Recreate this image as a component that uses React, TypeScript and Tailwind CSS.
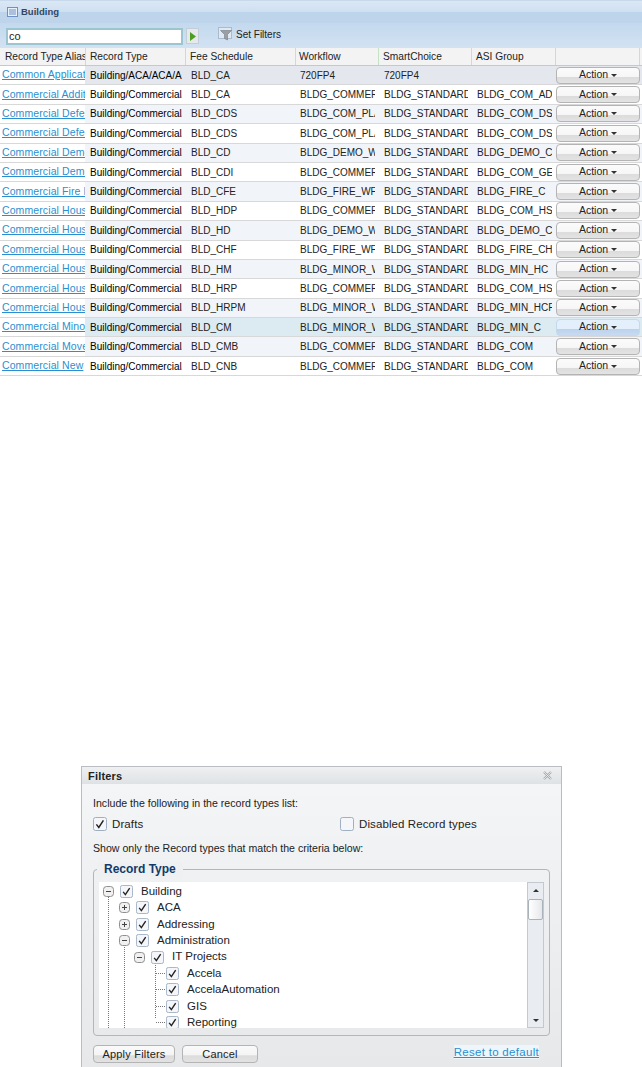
const rows = [
  ["Common Application", "Building/ACA/ACA/ACA", "BLD_CA", "720FP4", "720FP4", ""],
  ["Commercial Addition", "Building/Commercial/", "BLD_CA", "BLDG_COMMERCIAL", "BLDG_STANDARD", "BLDG_COM_AD"],
  ["Commercial Deferred", "Building/Commercial/", "BLD_CDS", "BLDG_COM_PLAN", "BLDG_STANDARD", "BLDG_COM_DS"],
  ["Commercial Deferred", "Building/Commercial/", "BLD_CDS", "BLDG_COM_PLAN", "BLDG_STANDARD", "BLDG_COM_DS"],
  ["Commercial Demolition", "Building/Commercial/", "BLD_CD", "BLDG_DEMO_WF", "BLDG_STANDARD", "BLDG_DEMO_C"],
  ["Commercial Demolition", "Building/Commercial/", "BLD_CDI", "BLDG_COMMERCIAL", "BLDG_STANDARD", "BLDG_COM_GE"],
  ["Commercial Fire Dam", "Building/Commercial/", "BLD_CFE", "BLDG_FIRE_WF", "BLDG_STANDARD", "BLDG_FIRE_C"],
  ["Commercial Housing", "Building/Commercial/", "BLD_HDP", "BLDG_COMMERCIAL", "BLDG_STANDARD", "BLDG_COM_HS"],
  ["Commercial Housing", "Building/Commercial/", "BLD_HD", "BLDG_DEMO_WF", "BLDG_STANDARD", "BLDG_DEMO_C"],
  ["Commercial Housing", "Building/Commercial/", "BLD_CHF", "BLDG_FIRE_WF", "BLDG_STANDARD", "BLDG_FIRE_CH"],
  ["Commercial Housing", "Building/Commercial/", "BLD_HM", "BLDG_MINOR_WF", "BLDG_STANDARD", "BLDG_MIN_HC"],
  ["Commercial Housing", "Building/Commercial/", "BLD_HRP", "BLDG_COMMERCIAL", "BLDG_STANDARD", "BLDG_COM_HS"],
  ["Commercial Housing", "Building/Commercial/", "BLD_HRPM", "BLDG_MINOR_WF", "BLDG_STANDARD", "BLDG_MIN_HCF"],
  ["Commercial Minor", "Building/Commercial/", "BLD_CM", "BLDG_MINOR_WF", "BLDG_STANDARD", "BLDG_MIN_C"],
  ["Commercial Move", "Building/Commercial/", "BLD_CMB", "BLDG_COMMERCIAL", "BLDG_STANDARD", "BLDG_COM"],
  ["Commercial New", "Building/Commercial/", "BLD_CNB", "BLDG_COMMERCIAL", "BLDG_STANDARD", "BLDG_COM"],
];

const headers = [
  { label: "Record Type Alias", cls: "w-[86px] pl-[5px]" },
  { label: "Record Type", cls: "w-[100px] pl-[4px]" },
  { label: "Fee Schedule", cls: "w-[110px] pl-[4px]" },
  { label: "Workflow", cls: "w-[83px] pl-[3px]" },
  { label: "SmartChoice", cls: "w-[93px] pl-[4px]" },
  { label: "ASI Group", cls: "w-[84px] pl-[4px]" },
  { label: "", cls: "w-[84px]" },
];

function rowBg(i: number) {
  if (i === 0) return "bg-[#e4e8ee]";
  if (i === 13) return "bg-[#dbebf1]";
  return i % 2 === 0 ? "bg-[#f1f5fa]" : "bg-white";
}

function Caret({ down = true }: { down?: boolean }) {
  return (
    <svg width="6" height="3" viewBox="0 0 6 3" className={down ? "" : "rotate-180"}>
      <path d="M0 0h6L3 3z" fill="#333" />
    </svg>
  );
}

function ActionButton({ active }: { active: boolean }) {
  return (
    <div
      className={`flex h-[17px] w-[84px] shrink-0 items-center justify-center gap-[3px] rounded-[4px] border text-[10.5px] ${
        active
          ? "border-[#c5d9ec] bg-[linear-gradient(#e3f0fc_0%,#e3f0fc_62%,#bcd3ee_63%,#c8daf0_100%)]"
          : "border-[#b4b4b4] bg-[linear-gradient(#fbfbfb_0%,#f6f6f6_60%,#dcdcdc_62%,#e3e3e3_100%)]"
      }`}
    >
      Action
      <Caret />
    </div>
  );
}

function Check({ checked = true, size = 13 }: { checked?: boolean; size?: number }) {
  return (
    <svg width={size} height={size} viewBox="0 0 14 14" className="shrink-0">
      <rect x="0.5" y="0.5" width="13" height="13" rx="2" fill="#f4f6f9" stroke="#9fb0c2" />
      {checked && <path d="M3.4 7.4l2.4 3 4.6-7" fill="none" stroke="#222" strokeWidth="1.5" />}
    </svg>
  );
}

function Expander({ open }: { open: boolean }) {
  return (
    <svg width="11" height="11" viewBox="0 0 11 11" className="shrink-0">
      <rect x="0.5" y="0.5" width="10" height="10" rx="3" fill="#f1f1f1" stroke="#8f8f8f" />
      <path d="M3 5.5h5" stroke="#444" />
      {!open && <path d="M5.500 3v5" stroke="#444" />}
    </svg>
  );
}

const tree = [
  { label: "Building", pad: "pl-[4px]", exp: "open" },
  { label: "ACA", pad: "pl-[20px]", exp: "closed" },
  { label: "Addressing", pad: "pl-[20px]", exp: "closed" },
  { label: "Administration", pad: "pl-[20px]", exp: "open" },
  { label: "IT Projects", pad: "pl-[35px]", exp: "open" },
  { label: "Accela", pad: "pl-[57px]", exp: "" },
  { label: "AccelaAutomation", pad: "pl-[57px]", exp: "" },
  { label: "GIS", pad: "pl-[57px]", exp: "" },
  { label: "Reporting", pad: "pl-[57px]", exp: "" },
];

function FilterIcon() {
  return (
    <svg width="15" height="14" viewBox="0 0 15 14">
      <rect x="0.5" y="0.5" width="13" height="11" fill="#dfe9f4" stroke="#a9bccf" />
      <path d="M2.500 3.500h11l-4 4v5.500l-3-1.500v-4z" fill="#9a9fa3" stroke="#6d7275" strokeWidth="0.5" />
    </svg>
  );
}

export default function App() {
  return (
    <div className="h-[1067px] w-[642px] overflow-hidden bg-white font-['Liberation_Sans',Arial,sans-serif] text-[#222]">
      <div className="flex h-[23px] items-center gap-[3px] border-t border-[#c9d9ec] bg-[linear-gradient(#dbe7f4_0%,#cfe0f1_50%,#bdd5ec_52%,#bdd4eb_100%)] pl-[7px]">
        <svg width="11" height="10" viewBox="0 0 11 10">
          <rect x="0.5" y="0.5" width="10" height="9" fill="#e8f0fa" stroke="#6f8fc7" />
          <path d="M2 3h7M2 5h7M2 7h7" stroke="#6f8fc7" />
        </svg>
        <span className="text-[9.5px] font-bold text-[#33475f]">Building</span>
      </div>

      <div className="flex h-[25px] items-center bg-[linear-gradient(#c3d9ee,#d2e2f2)] pl-[6px]">
        <div className="mt-[1px] flex h-[17px] w-[177px] items-center border-2 border-[#9cc6cf] bg-white pl-[1px] text-[11px]">
          co
        </div>
        <div className="ml-[3px] mt-[1px] flex h-[16px] w-[13px] items-center justify-center border border-[#c4ced8] bg-[#e6e9ec]">
          <svg width="6" height="9" viewBox="0 0 6 9">
            <path d="M0 0l6 4.500L0 9z" fill="#4f9c22" />
          </svg>
        </div>
        <div className="ml-[19px] flex items-center gap-[3px] pb-[3px] text-[10px]">
          <FilterIcon />
          <span>Set Filters</span>
        </div>
      </div>

      <div className="flex h-[18px] border-b border-[#c8c8c8] bg-[#f3f3f3] text-[10.2px]">
        {headers.map((h, i) => (
          <div
            key={i}
            className={`flex items-center overflow-hidden whitespace-nowrap border-r border-[#c6e2c6] ${h.cls}`}
          >
            {h.label}
          </div>
        ))}
      </div>

      <div className="w-[642px]">
        {rows.map((r, i) => (
          <div key={i} className={`flex h-[19.4px] items-center border-b border-[#d8d8d8] text-[10px] ${rowBg(i)}`}>
            <div className="flex h-full w-[85px] shrink-0 items-center overflow-hidden whitespace-nowrap bg-white pl-[2px] text-[10.5px] tracking-[0.1px] text-[#2a8fd0] underline">
              {r[0]}
            </div>
            <div className="ml-[5px] mr-[4px] w-[92px] shrink-0 overflow-hidden whitespace-nowrap text-black">{r[1]}</div>
            <div className="ml-[5px] mr-[5px] w-[99px] shrink-0 overflow-hidden whitespace-nowrap">{r[2]}</div>
            <div className="ml-[5px] mr-[4px] w-[75px] shrink-0 overflow-hidden whitespace-nowrap">{r[3]}</div>
            <div className="ml-[5px] mr-[4px] w-[84px] shrink-0 overflow-hidden whitespace-nowrap">{r[4]}</div>
            <div className="ml-[5px] mr-[4px] w-[75px] shrink-0 overflow-hidden whitespace-nowrap">{r[5]}</div>
            <ActionButton active={i === 13} />
          </div>
        ))}
      </div>

      <div className="ml-[81px] mt-[390px] h-[301px] w-[481px] border-x border-t border-[#b9bdc1] bg-[#e8eaed]">
        <div className="flex h-[17px] items-center justify-between bg-[linear-gradient(#eef0f2,#dfe2e4)] pl-[6px] pr-[9px]">
          <span className="text-[11px] font-bold tracking-[0.2px] text-[#222]">Filters</span>
          <svg width="9" height="9" viewBox="0 0 9 9">
            <path d="M1 1l7 7M8 1L1 8" stroke="#a5a9ad" strokeWidth="2.200" />
            <path d="M1 1l7 7M8 1L1 8" stroke="#eef0f2" strokeWidth="0.800" />
          </svg>
        </div>
        <div className="h-[283px] bg-[linear-gradient(#f3f5f6,#e6e8ea)] pl-[11px] pr-[11px] pt-[12px] text-[10.6px]">
          <p className="leading-[14px]">Include the following in the record types list:</p>
          <div className="mt-[6px] flex h-[16px] items-center">
            <div className="flex w-[247px] items-center gap-[5px]">
              <Check size={14} />
              <span className="text-[11.5px] tracking-[0.1px]">Drafts</span>
            </div>
            <div className="flex items-center gap-[5px]">
              <Check checked={false} size={14} />
              <span className="text-[11.5px] tracking-[0.1px]">Disabled Record types</span>
            </div>
          </div>
          <p className="mt-[9px] leading-[14px]">Show only the Record types that match the criteria below:</p>

          <div className="relative mt-[14px] h-[167px] w-[457px] rounded-[4px] border border-[#b3b7ba] pb-[7px] pl-[5px] pr-[5px] pt-[12px]">
            <span className="absolute left-[3px] top-[-8px] bg-[#eef0f1] px-[7px] text-[12px] font-bold leading-[15px] text-[#123a6b]">
              Record Type
            </span>
            <div className="relative flex h-[146px] overflow-hidden bg-white">
              <div className="absolute left-[9px] top-[8px] h-[138px] border-l border-dotted border-[#777]" />
              <div className="absolute left-[25px] top-[58px] h-[88px] border-l border-dotted border-[#777]" />
              <div className="absolute left-[56px] top-[80px] h-[56px] border-l border-dotted border-[#777]" />
              <div className="flex-1 pt-[1px]">
                {tree.map((n) => (
                  <div key={n.label} className={`relative flex h-[16.4px] items-center ${n.pad}`}>
                    {n.exp === "" ? (
                      <span className="mr-[1px] w-[9px] border-t border-dotted border-[#777]" />
                    ) : (
                      <span className="mr-[6px]">
                        <Expander open={n.exp === "open"} />
                      </span>
                    )}
                    <Check />
                    <span className="ml-[8px] text-[11.5px] text-[#222]">{n.label}</span>
                  </div>
                ))}
              </div>
              <div className="flex w-[17px] flex-col items-center border border-[#c2c9d0] bg-[#e9edf1]">
                <div className="flex h-[14px] items-center">
                  <Caret down={false} />
                </div>
                <div className="mt-[2px] h-[21px] w-[15px] rounded-[2px] border border-[#aab2ba] bg-[linear-gradient(90deg,#fff,#e5e8eb)]" />
                <div className="mt-auto flex h-[14px] items-center">
                  <Caret />
                </div>
              </div>
            </div>
          </div>

          <div className="mt-[9px] flex items-start justify-between pr-[11px]">
            <div className="flex gap-[7px] text-[11px]">
              <div className="flex h-[18px] w-[82px] items-center justify-center rounded-[4px] border border-[#b4b4b4] bg-[linear-gradient(#fafafa_0%,#f4f4f4_58%,#dcdcdc_60%,#e2e2e2_100%)] tracking-[0.2px]">
                Apply Filters
              </div>
              <div className="flex h-[18px] w-[76px] items-center justify-center rounded-[4px] border border-[#b4b4b4] bg-[linear-gradient(#fafafa_0%,#f4f4f4_58%,#dcdcdc_60%,#e2e2e2_100%)] tracking-[0.2px]">
                Cancel
              </div>
            </div>
            <span className="bg-[#eef6fc] text-[11.5px] leading-[14px] tracking-[0.3px] text-[#2a8fd0] underline">
              Reset to default
            </span>
          </div>
        </div>
      </div>
    </div>
  );
}
